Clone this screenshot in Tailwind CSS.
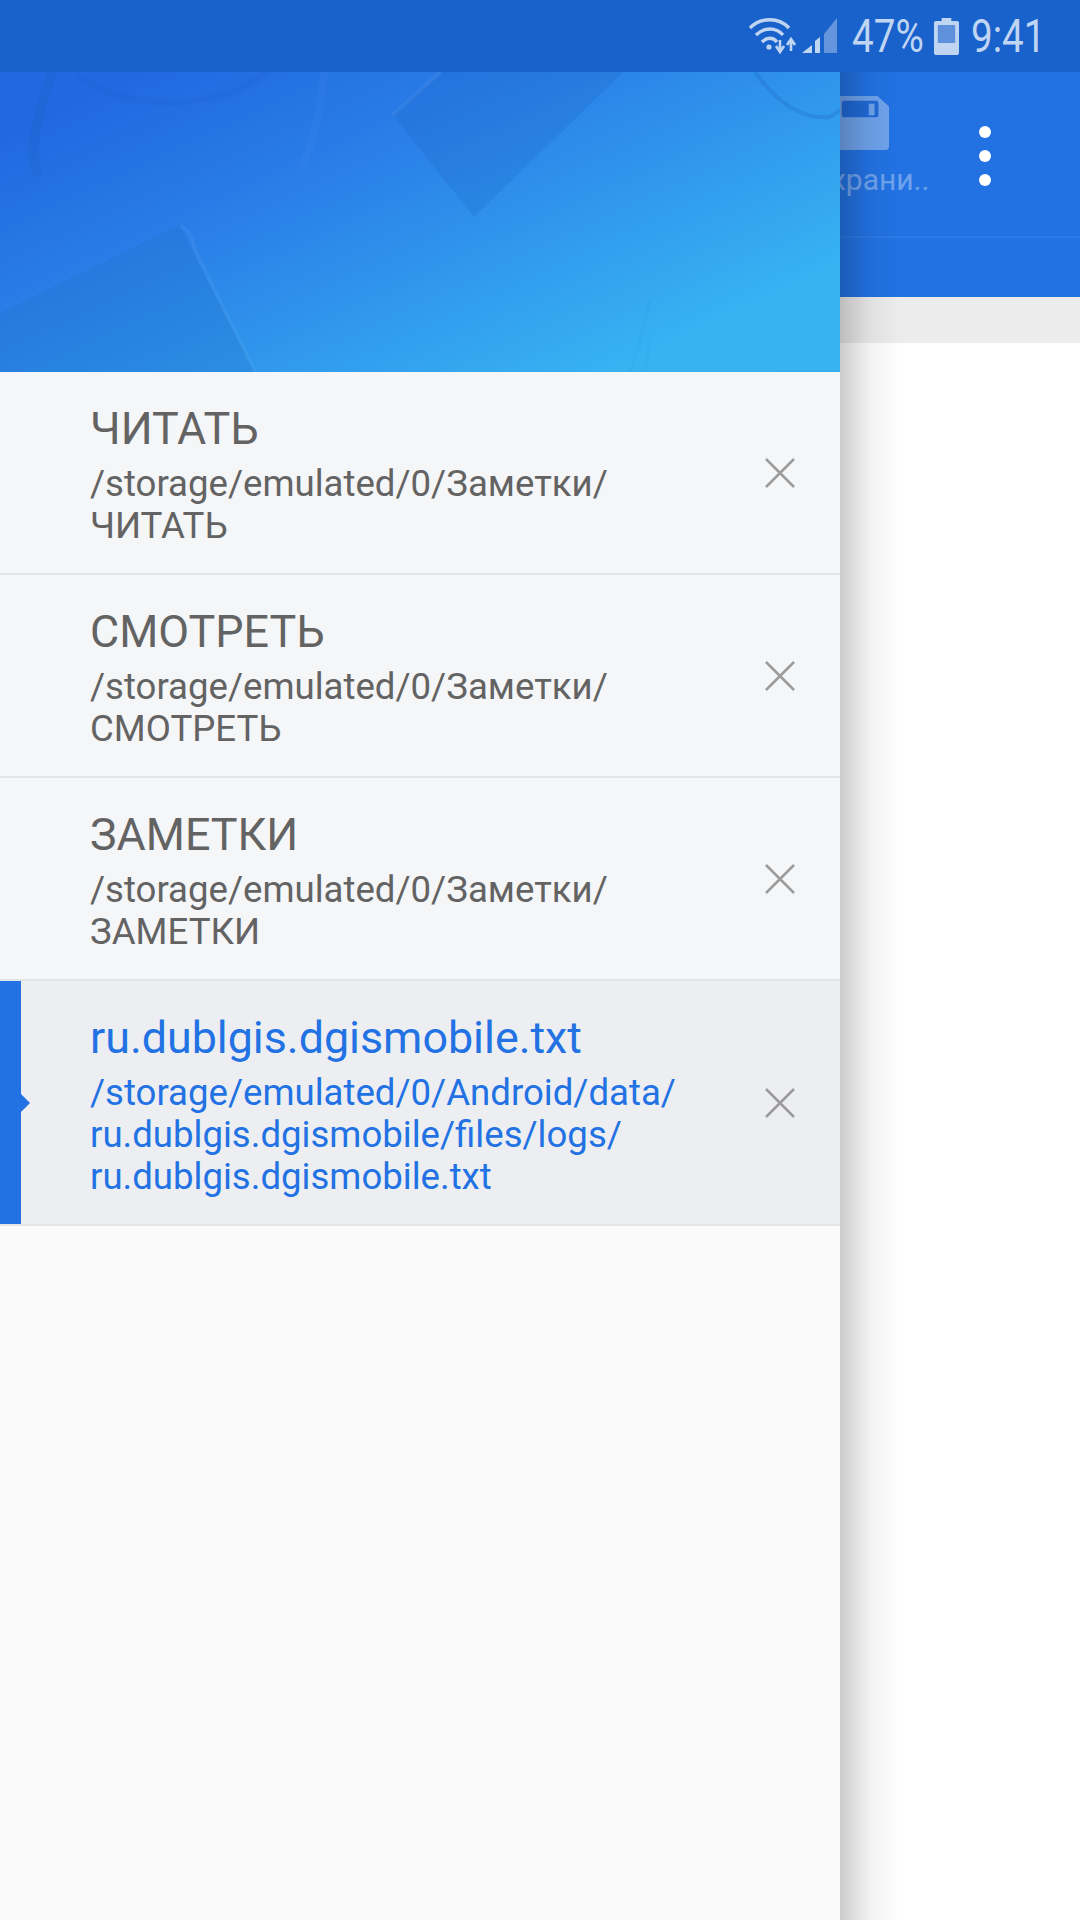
<!DOCTYPE html>
<html lang="ru">
<head>
    <meta charset="UTF-8">
    <meta name="viewport" content="width=device-width, initial-scale=1.0">
    <title>Файлы</title>
    <script src="https://cdn.jsdelivr.net/npm/@tailwindcss/browser@4"></script>
</head>
<body class="w-[1080px] h-[1920px] overflow-hidden bg-white font-['Roboto',sans-serif]">
    <!-- status bar -->
    <div class="relative z-20 h-[72px] bg-[#1a62cb] flex items-center justify-end pr-[39px] text-[#c0d5f2]">
        <svg class="w-[50px] h-[38px] mt-[-3px]" viewBox="0 0 50 38" fill="none">
            <path d="M2 12 C13 1 31 1 41 12" stroke="#c0d5f2" stroke-width="3.4"/>
            <path d="M8 19 C16 11 28 11 35 19" stroke="#c0d5f2" stroke-width="3.4"/>
            <path d="M14 26 C19 21 25 21 29 26" stroke="#c0d5f2" stroke-width="3.4"/>
            <circle cx="21" cy="31" r="2.6" fill="#c0d5f2"/>
            <path d="M32 24 V35 M28 30 L32 36 L36 30" stroke="#c0d5f2" stroke-width="2.6"/>
            <path d="M43 35 V24 M39 29 L43 23 L47 29" stroke="#c0d5f2" stroke-width="2.6"/>
        </svg>
        <svg class="w-[36px] h-[38px] ml-[4px] mt-[-2px]" viewBox="0 0 36 38">
            <path d="M0 37 L10 29 V37 Z" fill="#c0d5f2"/>
            <path d="M13 25 L18 21 V37 H13 Z" fill="#c0d5f2"/>
            <path d="M22 18 L35 2 V37 H22 Z" fill="#c0d5f2" fill-opacity="0.45"/>
        </svg>
        <span class="text-[46px] leading-none ml-[14px] w-[70px] scale-x-[0.84] origin-left whitespace-nowrap">47%</span>
        <svg class="w-[25px] h-[37px] ml-[12px]" viewBox="0 0 26 37" preserveAspectRatio="none">
            <path d="M8 0 H18 V3 H24 Q26 3 26 5 V35 Q26 37 24 37 H2 Q0 37 0 35 V5 Q0 3 2 3 H8 Z" fill="#c0d5f2"/>
            <rect x="4" y="7" width="18" height="18" fill="#5f90dc"/>
        </svg>
        <span class="text-[46px] leading-none ml-[12px] w-[70px] scale-x-[0.84] origin-left whitespace-nowrap">9:41</span>
    </div>

    <!-- screen behind the drawer -->
    <div class="relative h-[1848px]">
        <div class="h-[225px] bg-[#2272e4] shadow-[0_2px_6px_rgba(0,0,0,0.3)] flex flex-col">
            <div class="h-[166px] border-b-2 border-white/5 flex justify-end pr-[89px]">
                <div class="flex flex-col items-center mt-[24px] w-[132px] mr-[51px] opacity-35 text-white">
                    <svg class="w-[54px] h-[54px]" viewBox="0 0 56 56">
                        <path d="M4 0 H44 L56 11 V52 Q56 56 52 56 H4 Q0 56 0 52 V4 Q0 0 4 0 Z" fill="#fff"/>
                        <rect x="7" y="5" width="38" height="17" rx="2" fill="#1a5ec4"/>
                        <rect x="35" y="8" width="6" height="12" fill="#fff"/>
                    </svg>
                    <span class="text-[30px] leading-none mt-[15px] whitespace-nowrap">Сохрани..</span>
                </div>
                <div class="flex flex-col gap-[12px] mt-[54px]">
                    <span class="w-[12px] h-[12px] rounded-full bg-white"></span>
                    <span class="w-[12px] h-[12px] rounded-full bg-white"></span>
                    <span class="w-[12px] h-[12px] rounded-full bg-white"></span>
                </div>
            </div>
        </div>
        <div class="h-[46px] bg-[#ececec]"></div>

        <!-- drawer shadow -->
        <div class="absolute left-[840px] top-0 bottom-0 w-[60px] bg-linear-to-r from-black/20 via-black/5 to-transparent"></div>

        <!-- drawer -->
        <div class="absolute left-0 top-0 bottom-0 w-[840px] bg-[#fafafa] flex flex-col">
            <div class="relative h-[300px] overflow-hidden bg-[linear-gradient(155deg,#2169e0_10%,#2a80e8_38%,#37b3f2_85%)]">
                <svg class="absolute inset-0" width="840" height="300" viewBox="0 72 840 300" fill="none">
                    <path d="M441 72 L393 115 L474 217 L623 72 Z" fill="#1a5fc0" fill-opacity="0.2"/>
                    <path d="M0 313 L179 225 L255 372 L0 372 Z" fill="#1a6cc0" fill-opacity="0.22"/>
                    <path d="M180 226 Q190 228 195 250 L255 372" stroke="#fff" stroke-opacity="0.05" stroke-width="4"/>
                    <path d="M441 72 L393 115" stroke="#fff" stroke-opacity="0.05" stroke-width="4"/>
                    <path d="M75 72 C110 110 220 115 265 72" stroke="#1d5fcc" stroke-opacity="0.2" stroke-width="6"/>
                    <path d="M38 175 C25 140 45 100 52 72" stroke="#1a5fc0" stroke-opacity="0.2" stroke-width="10"/>
                    <path d="M300 170 C320 130 320 100 325 72" stroke="#3f88ea" stroke-opacity="0.2" stroke-width="8"/>
                    <path d="M755 72 C775 100 800 120 830 117 L840 110" stroke="#1a5fc0" stroke-opacity="0.25" stroke-width="4"/>
                    <path d="M630 372 C640 345 645 320 650 300 M645 372 L650 340 M775 372 H840" stroke="#1f8fdc" stroke-opacity="0.1" stroke-width="3"/>
                </svg>
            </div>

            <div class="flex h-[203px] bg-[#f5f6f8] border-b-2 border-[#e3e4e6] text-[#636363]">
                <div class="flex-1 pl-[90px] pt-[32px]">
                    <div class="text-[44.8px] leading-[50px]">ЧИТАТЬ</div>
                    <div class="text-[36.6px] leading-[42px] mt-[9px]">/storage/emulated/0/Заметки/<br>ЧИТАТЬ</div>
                </div>
                <div class="w-[120px] flex items-center justify-center">
                    <svg class="w-[30px] h-[30px]" viewBox="0 0 30 30" stroke="#9b9b9b" stroke-width="2.6"><path d="M1 1 L29 29 M29 1 L1 29"/></svg>
                </div>
            </div>

            <div class="flex h-[203px] bg-[#f5f6f8] border-b-2 border-[#e3e4e6] text-[#636363]">
                <div class="flex-1 pl-[90px] pt-[32px]">
                    <div class="text-[44.8px] leading-[50px]">СМОТРЕТЬ</div>
                    <div class="text-[36.6px] leading-[42px] mt-[9px]">/storage/emulated/0/Заметки/<br>СМОТРЕТЬ</div>
                </div>
                <div class="w-[120px] flex items-center justify-center">
                    <svg class="w-[30px] h-[30px]" viewBox="0 0 30 30" stroke="#9b9b9b" stroke-width="2.6"><path d="M1 1 L29 29 M29 1 L1 29"/></svg>
                </div>
            </div>

            <div class="flex h-[203px] bg-[#f5f6f8] border-b-2 border-[#e3e4e6] text-[#636363]">
                <div class="flex-1 pl-[90px] pt-[32px]">
                    <div class="text-[44.8px] leading-[50px]">ЗАМЕТКИ</div>
                    <div class="text-[36.6px] leading-[42px] mt-[9px]">/storage/emulated/0/Заметки/<br>ЗАМЕТКИ</div>
                </div>
                <div class="w-[120px] flex items-center justify-center">
                    <svg class="w-[30px] h-[30px]" viewBox="0 0 30 30" stroke="#9b9b9b" stroke-width="2.6"><path d="M1 1 L29 29 M29 1 L1 29"/></svg>
                </div>
            </div>

            <div class="flex h-[245px] bg-[#edeef1] border-b-2 border-[#e3e4e6] text-[#2272e4]">
                <div class="w-[21px] bg-[#2272e4] relative">
                    <span class="absolute left-[21px] top-[113px] w-[9px] h-[18px] bg-[#2272e4] [clip-path:polygon(0_0,100%_50%,0_100%)]"></span>
                </div>
                <div class="flex-1 pl-[69px] pt-[32px]">
                    <div class="text-[44.8px] leading-[50px]">ru.dublgis.dgismobile.txt</div>
                    <div class="text-[36.6px] leading-[42px] mt-[9px]">/storage/emulated/0/Android/data/<br>ru.dublgis.dgismobile/files/logs/<br>ru.dublgis.dgismobile.txt</div>
                </div>
                <div class="w-[120px] flex items-center justify-center">
                    <svg class="w-[30px] h-[30px]" viewBox="0 0 30 30" stroke="#9b9b9b" stroke-width="2.6"><path d="M1 1 L29 29 M29 1 L1 29"/></svg>
                </div>
            </div>
        </div>
    </div>
</body>
</html>
